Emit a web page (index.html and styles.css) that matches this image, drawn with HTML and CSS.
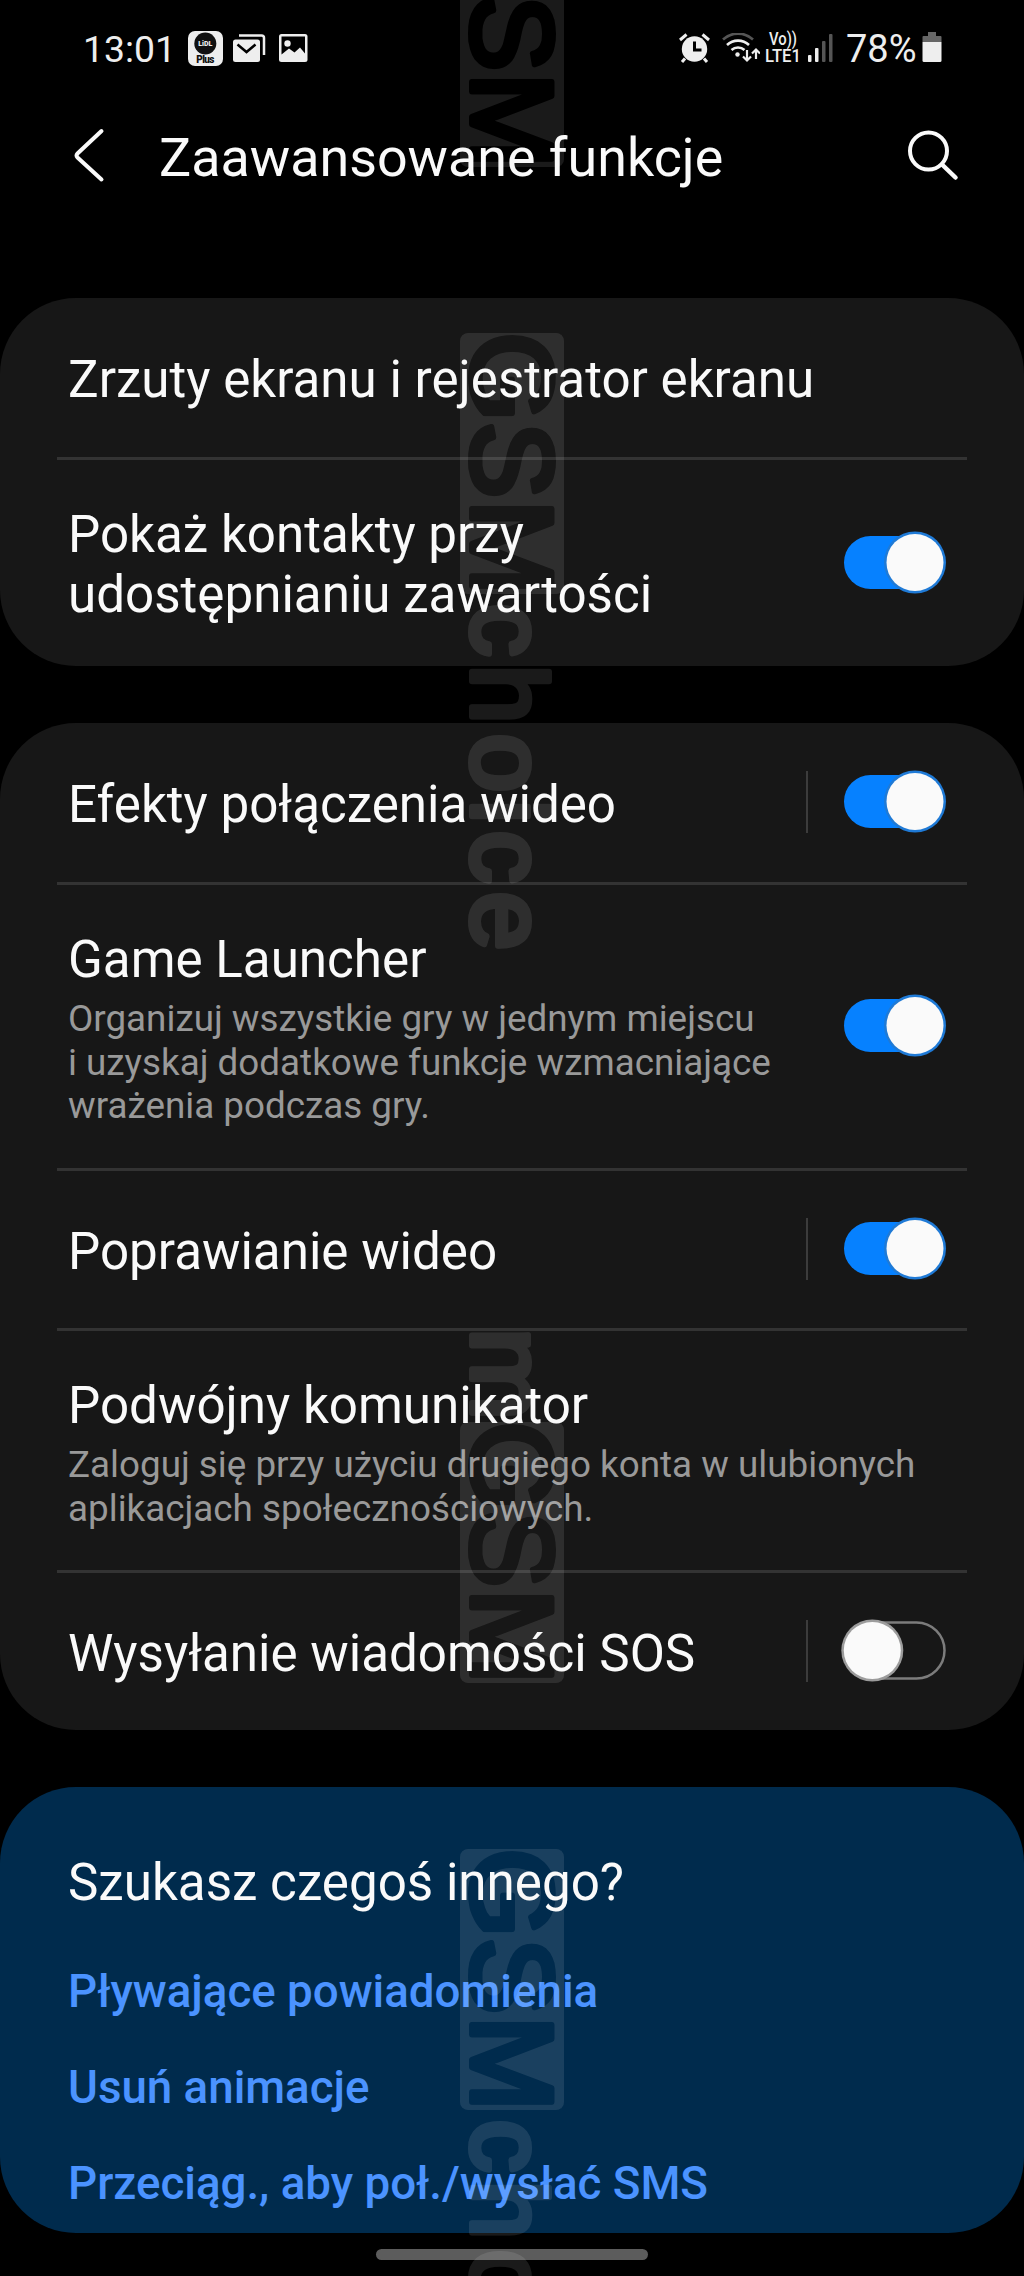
FILE: index.html
```html
<!DOCTYPE html>
<html lang="pl">
<head>
  <meta charset="UTF-8">
  <title>Zaawansowane funkcje</title>
  <link rel="stylesheet" href="styles.css">
</head>
<body>
  <svg width="0" height="0" class="defs">
    <symbol id="switch-on" viewBox="0 0 106 64">
      <rect x="3" y="5" width="101" height="53" rx="26.5" fill="#0681ff"/>
      <circle cx="74" cy="31.500" r="31" fill="#1f7ad6"/>
      <circle cx="74" cy="31.500" r="28.500" fill="#fafafa"/>
    </symbol>
    <symbol id="switch-off" viewBox="0 0 106 64">
      <rect x="4" y="3.500" width="99.500" height="56" rx="28" fill="none" stroke="#7c7c7c" stroke-width="2.500"/>
      <circle cx="31.300" cy="31.500" r="31" fill="#9c9c9c"/>
      <circle cx="31.300" cy="31.500" r="28.500" fill="#fafafa"/>
    </symbol>
  </svg>

  <div class="status-bar">
    <span class="clock">13:01</span>
    <svg class="ic-app" width="35" height="35" viewBox="0 0 35 35">
      <rect width="35" height="35" rx="7" fill="#eee"/>
      <circle cx="17.300" cy="12.500" r="11" fill="#111"/>
      <text x="17.300" y="15" text-anchor="middle" class="app-logo">LiDL</text>
      <text x="17.300" y="31.500" text-anchor="middle" class="app-name" textLength="18">Plus</text>
    </svg>
    <svg class="ic-mail" width="33" height="29" viewBox="0 0 33 29">
      <path d="M6 1.500h22.500q2.500 0 2.500 2.500v17" fill="none" stroke="#eee" stroke-width="2.500"/>
      <rect y="5.500" width="27" height="22.500" rx="2.500" fill="#eee"/>
      <path d="M4.500 10.500l9 7.500 9-7.500" fill="none" stroke="#000" stroke-width="2.500"/>
    </svg>
    <svg class="ic-pic" width="29" height="29" viewBox="0 0 29 29">
      <rect width="28.500" height="28" rx="2.500" fill="#eee"/>
      <path d="M2.500 2.500h23.500v17l-5-6-5.500 5-5.500-4-7.500 6z" fill="#000"/>
      <circle cx="8.500" cy="9.500" r="3.200" fill="#eee"/>
    </svg>

    <div class="status-right">
      <svg width="32" height="30" viewBox="0 0 32 30">
        <circle cx="15.500" cy="16" r="12.700" fill="#eee"/>
        <path d="M1 7l6.500-5.500M30 7l-6.500-5.500M6 25.500l-3 3.500M25 25.500l3 3.500" stroke="#eee" stroke-width="3" fill="none"/>
        <path d="M15.500 8.500v8.500h7" stroke="#000" stroke-width="3" fill="none"/>
      </svg>
      <svg class="ic-wifi" width="38" height="30" viewBox="0 0 38 30">
        <g fill="none" stroke-width="2.600">
          <path d="M1 6.500a22 22 0 0 1 30 0" stroke="#555"/>
          <path d="M5 12a16 16 0 0 1 22 0" stroke="#eee"/>
          <path d="M9.500 17a9.500 9.500 0 0 1 13 0" stroke="#eee"/>
          <path d="M25 17v10M21 23.500l4 4 4-4M34 26v-9M30 20.500l4-4 4 4" stroke="#eee" stroke-width="2.200"/>
        </g>
        <circle cx="15.500" cy="21.500" r="2.200" fill="#eee"/>
      </svg>
      <svg class="ic-lte" width="37" height="34" viewBox="0 0 37 34">
        <text x="4" y="13" textLength="28" lengthAdjust="spacingAndGlyphs" class="lte">Vo))</text>
        <text x="0" y="29.500" textLength="36" lengthAdjust="spacingAndGlyphs" class="lte">LTE1</text>
      </svg>
      <svg class="ic-signal" width="25" height="28" viewBox="0 0 25 28">
        <rect x="0" y="21" width="3.500" height="7" rx="1" fill="#eee"/>
        <rect x="7" y="14" width="3.500" height="14" rx="1" fill="#eee"/>
        <rect x="14" y="7" width="3.500" height="21" rx="1" fill="#555"/>
        <rect x="21" y="0" width="3.500" height="28" rx="1" fill="#555"/>
      </svg>
      <span class="percent">78%</span>
      <svg class="ic-battery" width="20" height="31" viewBox="0 0 20 31">
        <path d="M6 0h8v4h4.500q1 0 1 1v5h-19v-5q0-1 1-1h4.500z" fill="#666"/>
        <path d="M.5 10h19v18.500q0 1.500-1.500 1.500h-16q-1.500 0-1.500-1.500z" fill="#eee"/>
      </svg>
    </div>
  </div>

  <div class="header">
    <svg class="back" width="32" height="56" viewBox="0 0 32 56">
      <path d="M28.500 4L4.500 26.500q-2 2 0 4L28.500 52.500" fill="none" stroke="#fafafa" stroke-width="4" stroke-linecap="round"/>
    </svg>
    <h1>Zaawansowane funkcje</h1>
    <svg class="search" width="52" height="52" viewBox="0 0 52 52">
      <circle cx="21.500" cy="22" r="18.500" fill="none" stroke="#fafafa" stroke-width="4"/>
      <path d="M35 35.500l13.500 13" stroke="#fafafa" stroke-width="4.500" stroke-linecap="round"/>
    </svg>
  </div>

  <div class="card">
    <div class="row">
      <div class="label"><h2>Zrzuty ekranu i rejestrator ekranu</h2></div>
    </div>
    <div class="row tall">
      <div class="label"><h2>Pokaż kontakty przy<br>udostępnianiu zawartości</h2></div>
      <svg class="switch"><use href="#switch-on"/></svg>
    </div>
  </div>

  <div class="card">
    <div class="row">
      <div class="label"><h2>Efekty połączenia wideo</h2></div>
      <span class="sep"></span>
      <svg class="switch"><use href="#switch-on"/></svg>
    </div>
    <div class="row launcher">
      <div class="label">
        <h2>Game Launcher</h2>
        <p>Organizuj wszystkie gry w jednym miejscu<br>i uzyskaj dodatkowe funkcje wzmacniające<br>wrażenia podczas gry.</p>
      </div>
      <svg class="switch"><use href="#switch-on"/></svg>
    </div>
    <div class="row enhancer">
      <div class="label"><h2>Poprawianie wideo</h2></div>
      <span class="sep"></span>
      <svg class="switch"><use href="#switch-on"/></svg>
    </div>
    <div class="row messenger">
      <div class="label">
        <h2>Podwójny komunikator</h2>
        <p>Zaloguj się przy użyciu drugiego konta w ulubionych<br>aplikacjach społecznościowych.</p>
      </div>
    </div>
    <div class="row">
      <div class="label"><h2>Wysyłanie wiadomości SOS</h2></div>
      <span class="sep"></span>
      <svg class="switch"><use href="#switch-off"/></svg>
    </div>
  </div>

  <div class="card related">
    <h2>Szukasz czegoś innego?</h2>
    <a>Pływające powiadomienia</a>
    <a>Usuń animacje</a>
    <a>Przeciąg., aby poł./wysłać SMS</a>
  </div>

  <div class="nav-handle"></div>

  <!-- vertical watermark, runs top to bottom -->
  <svg class="watermark" width="1024" height="2276" viewBox="0 0 1024 2276">
    <defs>
      <mask id="gsm" maskUnits="userSpaceOnUse" x="0" y="-96" width="262" height="106">
        <rect x="0" y="-95" width="261" height="104" rx="8" fill="#fff"/>
        <text class="wm cut" x="44 127 214.500" y="-3">GSM</text>
      </mask>
      <g id="box"><rect x="0" y="-95" width="261" height="104" mask="url(#gsm)"/></g>
      <g id="choice"><text class="wm small" x="297 361 430 478.500 524 588" y="-3">choice</text></g>
    </defs>
    <g fill="#fff" stroke="#fff" opacity=".105">
      <g transform="translate(469 -94) rotate(90)"><use href="#box" stroke="none"/></g>
      <g transform="translate(469 333) rotate(90)"><use href="#box" stroke="none"/><use href="#choice"/></g>
      <g transform="translate(469 1422) rotate(90)"><text class="wm small" x="-94" y="-3" textLength="92" lengthAdjust="spacingAndGlyphs" text-anchor="start">m</text><use href="#box" stroke="none"/></g>
      <g transform="translate(469 1849) rotate(90)"><use href="#box" stroke="none"/><use href="#choice"/></g>
    </g>
  </svg>
</body>
</html>
```
FILE: styles.css
```css
* { box-sizing: border-box; }
body { margin: 0; width: 1024px; height: 2276px; overflow: hidden; position: relative; background: #000; color: #fafafa; font-family: Roboto, sans-serif; }
h1, h2, p { margin: 0; font-weight: 400; }
.defs { display: block; }

.status-bar { display: flex; align-items: flex-start; height: 98px; padding: 0 82px; color: #eee; }
.clock { width: 106px; margin-top: 27px; padding-left: 1px; font-size: 37.300px; line-height: 44px; }
.ic-app { margin-top: 31px; }
.ic-mail { margin: 34px 0 0 10px; }
.ic-pic { margin: 34px 0 0 13px; }
.app-logo { font-size: 7px; font-weight: 900; fill: #eee; }
.app-name { font-size: 10px; font-weight: 900; fill: #111; }
.status-right { display: flex; align-items: flex-start; margin-left: auto; padding-top: 33px; }
.ic-wifi { margin-left: 11px; }
.ic-lte { margin: -1px 0 0 5px; overflow: visible; }
.lte { font-size: 17.500px; font-weight: 500; fill: #eee; }
.ic-signal { margin: 1px 13px 0 6px; }
.percent { margin-top: -6px; width: 76px; font-size: 38px; line-height: 44px; }
.ic-battery { margin-top: -1px; }

.header { display: flex; align-items: center; height: 114px; padding: 0 65px 0 73px; margin-bottom: 86px; }
.header h1 { flex: 1; margin-left: 54px; padding-top: 5px; font-size: 53.800px; line-height: 64px; }

.card { background: #171717; border-radius: 76px; margin-bottom: 57px; padding: 0 77px 0 57px; }
.row { display: flex; align-items: center; width: 910px; height: 162px; padding-left: 11px; border-bottom: 3px solid #333; }
.row:last-child { height: 157px; border-bottom: 0; }
.card .row.tall { height: 206px; }
.row.launcher { height: 286px; }
.row.enhancer { height: 160px; }
.row.messenger { height: 242px; }
.label { flex: 1; padding-top: 4px; }
.launcher .label, .messenger .label { padding-top: 5px; }
h2 { font-size: 51.150px; line-height: 60px; white-space: nowrap; }
.row p { margin-top: 7px; color: #999; font-size: 36.800px; line-height: 43.500px; white-space: nowrap; }
.switch { width: 106px; height: 64px; margin: 0 20px 1px 0; }
.sep { width: 2px; height: 62px; margin: 0 33px 1px 0; background: #3c3c3c; }

.related { height: 446px; margin-bottom: 0; padding: 66px 68px 0; background: #002b4d; }
.related h2 { margin-bottom: 52px; }
.related a { display: block; margin-bottom: 43px; color: #4b93ff; font-size: 45.700px; font-weight: 500; line-height: 53px; white-space: nowrap; }

.nav-handle { width: 272px; height: 11px; margin: 16px auto 0; border-radius: 6px; background: #5c5c5c; }

.watermark { position: absolute; left: 0; top: 0; pointer-events: none; }
.wm { font-family: "Liberation Sans", sans-serif; font-size: 115px; stroke-width: 6px; stroke-linejoin: round; }
.cut, #choice .wm { text-anchor: middle; }
.wm.small { font-size: 106px; }
.cut { fill: #000; stroke: #000; }
```
